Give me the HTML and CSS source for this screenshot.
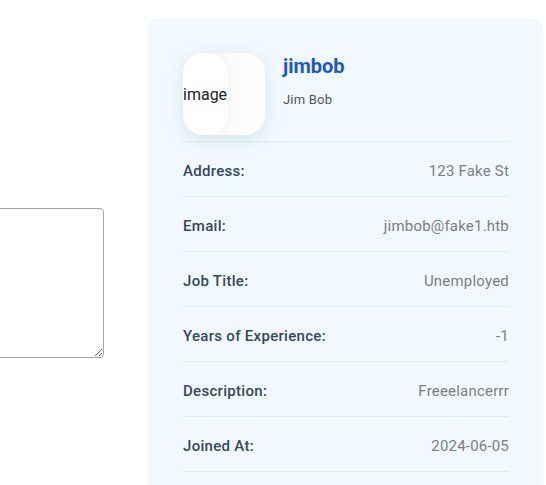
FILE: index.html
```html
<!DOCTYPE html>
<html>
<head>
<meta charset="utf-8">
<link rel="stylesheet" href="styles.css">
</head>
<body>
<div class="page">
  <div class="left">
    <textarea class="note"></textarea>
  </div>
  <div class="card">
    <div class="header">
      <div class="avatar"><span class="alt">image</span></div>
      <div class="names">
        <div class="username">jimbob</div>
        <div class="fullname">Jim Bob</div>
      </div>
    </div>
    <div class="row"><span class="label">Address:</span><span class="value">123 Fake St</span></div>
    <div class="row"><span class="label">Email:</span><span class="value">jimbob@fake1.htb</span></div>
    <div class="row"><span class="label">Job Title:</span><span class="value">Unemployed</span></div>
    <div class="row"><span class="label">Years of Experience:</span><span class="value">-1</span></div>
    <div class="row"><span class="label">Description:</span><span class="value">Freeelancerrr</span></div>
    <div class="row"><span class="label">Joined At:</span><span class="value">2024-06-05</span></div>
  </div>
</div>
</body>
</html>
```
FILE: styles.css
```css
html, body {
  margin: 0;
  padding: 0;
  background: #ffffff;
  overflow: hidden;
}
body {
  font-family: Roboto, "Noto Sans", sans-serif;
}
.page {
  display: flex;
  align-items: flex-start;
  padding-top: 18px;
}
.left {
  width: 104px;
  flex-shrink: 0;
  display: flex;
  justify-content: flex-end;
  padding-top: 190px;
  margin-right: 44px;
}
.note {
  flex-shrink: 0;
  width: 200px;
  height: 150px;
  box-sizing: border-box;
  border: 1px solid #a3a3a3;
  border-radius: 4px;
  margin: 0;
  background: #fff;
}
.card {
  width: 395px;
  box-sizing: border-box;
  background: #f1f9fe;
  border-radius: 10px;
  padding: 35px 34px 20px 35px;
  min-height: 480px;
}
.header {
  display: flex;
  align-items: flex-start;
  gap: 18px;
  padding-bottom: 6px;
  border-bottom: 1px solid #d5eff9;
}
.avatar {
  width: 82px;
  height: 82px;
  border-radius: 20px;
  background: linear-gradient(90deg, #f3f3f3 0%, #fafafa 50%, #ffffff 100%);
  box-shadow: 0 4px 18px rgba(120, 150, 170, 0.22);
  display: flex;
  align-items: center;
  overflow: hidden;
}
.alt {
  height: 100%;
  width: 45px;
  background: #ffffff;
  border-radius: 20px;
  display: flex;
  align-items: center;
  font-size: 16px;
  color: #222;
  box-shadow: 2px 0 6px rgba(0,0,0,0.03);
}
.names {
  padding-top: 0;
}
.username {
  font-size: 20px;
  font-weight: 700;
  color: #1b55d0;
  line-height: 26px;
}
.fullname {
  margin-top: 12px;
  font-size: 13px;
  color: #555;
  line-height: 18px;
  letter-spacing: 0.2px;
}
.row {
  display: flex;
  justify-content: space-between;
  align-items: center;
  box-sizing: border-box;
  height: 55px;
  padding-top: 3px;
  border-bottom: 1px solid #d5eff9;
  font-size: 15px;
}
.label {
  color: #34495b;
  font-weight: 500;
  letter-spacing: 0.3px;
}
.value {
  color: #7b7f83;
  letter-spacing: 0.2px;
}
```
